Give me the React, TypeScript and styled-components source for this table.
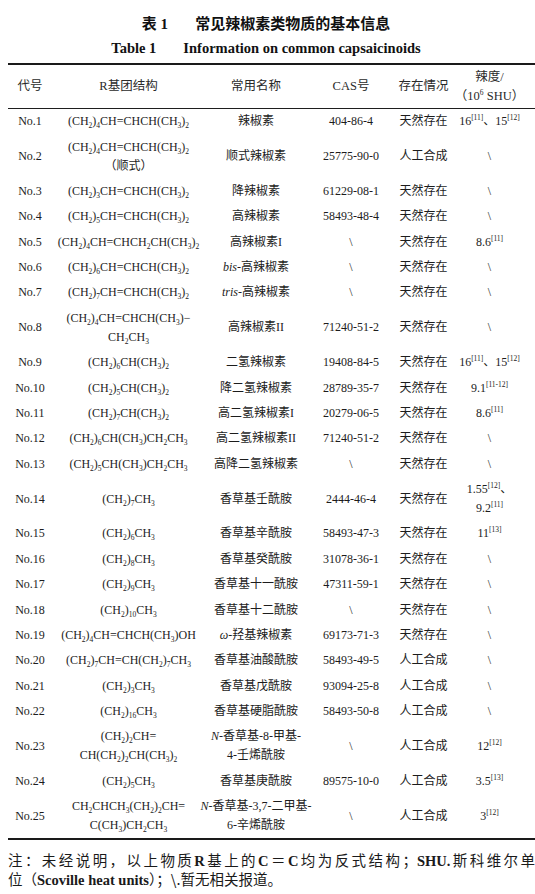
import React from "react";
import styled, { createGlobalStyle } from "styled-components";

const GlobalStyle = createGlobalStyle`
  html, body {
    margin: 0;
    padding: 0;
    background: #ffffff;
    overflow: hidden;
  }
  body {
    font-family: "Liberation Serif", "Noto Sans CJK SC", serif;
    color: #1c1c1c;
  }
`;

const Page = styled.div`
  width: 535px;
  padding: 12px 0 0 8px;
  box-sizing: border-box;
`;

const TitleBlock = styled.div`
  padding-right: 11px;
  margin-bottom: 3px;
`;

const TitleLine = styled.div<{ $latin?: boolean }>`
  display: flex;
  justify-content: center;
  gap: 27px;
  height: 24px;
  line-height: 24px;
  font-weight: 700;
  font-size: ${(p) => (p.$latin ? "14.5px" : "15px")};
  font-family: ${(p) =>
    p.$latin
      ? `"Liberation Serif", serif`
      : `"Liberation Serif", "Noto Sans CJK SC", serif`};
  color: #111;
`;

const Table = styled.div`
  width: 527px;
  border-top: 2.5px solid #1a1a1a;
  border-bottom: 2.5px solid #1a1a1a;
  font-size: 12px;
`;

const Row = styled.div<{ $head?: boolean }>`
  display: grid;
  grid-template-columns: 44px 153px 102px 88px 57px 83px;
  align-items: center;
  border-bottom: ${(p) => (p.$head ? "1.3px solid #1e1e1e" : "none")};
  padding: ${(p) => (p.$head ? "2.5px 0" : "0")};
`;

const Cell = styled.div<{ $last?: boolean }>`
  display: flex;
  flex-direction: column;
  align-items: center;
  justify-content: center;
  text-align: center;
  line-height: 19px;
  padding: 3.2px ${(p) => (p.$last ? "8px" : "0")} 3.2px 0;
  white-space: nowrap;
  color: #1c1c1c;
`;

const HeadCell = styled(Cell)`
  padding-top: 0;
  padding-bottom: 0;
  font-size: 12.5px;
  color: #2a2a2a;
`;

const Sub = styled.sub`
  font-size: 7.5px;
  line-height: 0;
  vertical-align: -2.5px;
`;

const Sup = styled.sup`
  font-size: 7.5px;
  line-height: 0;
  vertical-align: 5px;
`;

const It = styled.i`
  font-style: italic;
`;

const Note = styled.div`
  margin-top: 11px;
  width: 527px;
  font-family: "Noto Sans CJK SC", sans-serif;
  font-size: 14.5px;
  line-height: 17px;
  color: #1a1a1a;
`;

const NoteLine = styled.div<{ $justify?: boolean }>`
  white-space: nowrap;
  text-align: ${(p) => (p.$justify ? "justify" : "left")};
  text-align-last: ${(p) => (p.$justify ? "justify" : "left")};
`;

const Latin = styled.span`
  font-family: "Liberation Serif", serif;
  font-weight: 700;
`;

const Formula = ({ f }: { f: string }) => {
  const parts = f.split(/(_\d+)/);
  return (
    <span>
      {parts.map((p, i) =>
        p.startsWith("_") ? <Sub key={i}>{p.slice(1)}</Sub> : <React.Fragment key={i}>{p}</React.Fragment>
      )}
    </span>
  );
};

type RowData = {
  r: string[];
  name: React.ReactNode[];
  cas: string;
  state: string;
  spice: React.ReactNode[];
};

const none = ["\\"];

const rows: RowData[] = [
  { r: ["(CH_2)_4CH=CHCH(CH_3)_2"], name: ["辣椒素"], cas: "404-86-4", state: "天然存在", spice: [<>16<Sup>[11]</Sup>、15<Sup>[12]</Sup></>] },
  { r: ["(CH_2)_4CH=CHCH(CH_3)_2", "（顺式）"], name: ["顺式辣椒素"], cas: "25775-90-0", state: "人工合成", spice: none },
  { r: ["(CH_2)_3CH=CHCH(CH_3)_2"], name: ["降辣椒素"], cas: "61229-08-1", state: "天然存在", spice: none },
  { r: ["(CH_2)_5CH=CHCH(CH_3)_2"], name: ["高辣椒素"], cas: "58493-48-4", state: "天然存在", spice: none },
  { r: ["(CH_2)_4CH=CHCH_2CH(CH_3)_2"], name: ["高辣椒素I"], cas: "\\", state: "天然存在", spice: [<>8.6<Sup>[11]</Sup></>] },
  { r: ["(CH_2)_6CH=CHCH(CH_3)_2"], name: [<><It>bis</It>-高辣椒素</>], cas: "\\", state: "天然存在", spice: none },
  { r: ["(CH_2)_7CH=CHCH(CH_3)_2"], name: [<><It>tris</It>-高辣椒素</>], cas: "\\", state: "天然存在", spice: none },
  { r: ["(CH_2)_4CH=CHCH(CH_3)−", "CH_2CH_3"], name: ["高辣椒素II"], cas: "71240-51-2", state: "天然存在", spice: none },
  { r: ["(CH_2)_6CH(CH_3)_2"], name: ["二氢辣椒素"], cas: "19408-84-5", state: "天然存在", spice: [<>16<Sup>[11]</Sup>、15<Sup>[12]</Sup></>] },
  { r: ["(CH_2)_5CH(CH_3)_2"], name: ["降二氢辣椒素"], cas: "28789-35-7", state: "天然存在", spice: [<>9.1<Sup>[11-12]</Sup></>] },
  { r: ["(CH_2)_7CH(CH_3)_2"], name: ["高二氢辣椒素I"], cas: "20279-06-5", state: "天然存在", spice: [<>8.6<Sup>[11]</Sup></>] },
  { r: ["(CH_2)_6CH(CH_3)CH_2CH_3"], name: ["高二氢辣椒素II"], cas: "71240-51-2", state: "天然存在", spice: none },
  { r: ["(CH_2)_5CH(CH_3)CH_2CH_3"], name: ["高降二氢辣椒素"], cas: "\\", state: "天然存在", spice: none },
  { r: ["(CH_2)_7CH_3"], name: ["香草基壬酰胺"], cas: "2444-46-4", state: "天然存在", spice: [<>1.55<Sup>[12]</Sup>、</>, <>9.2<Sup>[11]</Sup></>] },
  { r: ["(CH_2)_6CH_3"], name: ["香草基辛酰胺"], cas: "58493-47-3", state: "天然存在", spice: [<>11<Sup>[13]</Sup></>] },
  { r: ["(CH_2)_8CH_3"], name: ["香草基癸酰胺"], cas: "31078-36-1", state: "天然存在", spice: none },
  { r: ["(CH_2)_9CH_3"], name: ["香草基十一酰胺"], cas: "47311-59-1", state: "天然存在", spice: none },
  { r: ["(CH_2)_10CH_3"], name: ["香草基十二酰胺"], cas: "\\", state: "天然存在", spice: none },
  { r: ["(CH_2)_4CH=CHCH(CH_3)OH"], name: [<><It>ω</It>-羟基辣椒素</>], cas: "69173-71-3", state: "天然存在", spice: none },
  { r: ["(CH_2)_7CH=CH(CH_2)_7CH_3"], name: ["香草基油酸酰胺"], cas: "58493-49-5", state: "人工合成", spice: none },
  { r: ["(CH_2)_3CH_3"], name: ["香草基戊酰胺"], cas: "93094-25-8", state: "人工合成", spice: none },
  { r: ["(CH_2)_16CH_3"], name: ["香草基硬脂酰胺"], cas: "58493-50-8", state: "人工合成", spice: none },
  { r: ["(CH_2)_2CH=", "CH(CH_2)_2CH(CH_3)_2"], name: [<><It>N</It>-香草基-8-甲基-</>, "4-壬烯酰胺"], cas: "\\", state: "人工合成", spice: [<>12<Sup>[12]</Sup></>] },
  { r: ["(CH_2)_5CH_3"], name: ["香草基庚酰胺"], cas: "89575-10-0", state: "人工合成", spice: [<>3.5<Sup>[13]</Sup></>] },
  { r: ["CH_2CHCH_3(CH_2)_2CH=", "C(CH_3)CH_2CH_3"], name: [<><It>N</It>-香草基-3,7-二甲基-</>, "6-辛烯酰胺"], cas: "\\", state: "人工合成", spice: [<>3<Sup>[12]</Sup></>] },
];

const Lines = ({ items }: { items: React.ReactNode[] }) => (
  <>
    {items.map((it, i) => (
      <div key={i}>{it}</div>
    ))}
  </>
);

export default function App() {
  return (
    <Page>
      <GlobalStyle />
      <TitleBlock>
        <TitleLine>
          <span>表 1</span>
          <span>常见辣椒素类物质的基本信息</span>
        </TitleLine>
        <TitleLine $latin>
          <span>Table 1</span>
          <span>Information on common capsaicinoids</span>
        </TitleLine>
      </TitleBlock>

      <Table>
        <Row $head>
          <HeadCell>代号</HeadCell>
          <HeadCell>R基团结构</HeadCell>
          <HeadCell>常用名称</HeadCell>
          <HeadCell>CAS号</HeadCell>
          <HeadCell>存在情况</HeadCell>
          <HeadCell $last>
            <div>辣度/</div>
            <div>
              （10<Sup>6</Sup> SHU）
            </div>
          </HeadCell>
        </Row>
        {rows.map((row, i) => (
          <Row key={i}>
            <Cell>No.{i + 1}</Cell>
            <Cell>
              {row.r.map((f, j) => (
                <div key={j}>
                  <Formula f={f} />
                </div>
              ))}
            </Cell>
            <Cell>
              <Lines items={row.name} />
            </Cell>
            <Cell>{row.cas}</Cell>
            <Cell>{row.state}</Cell>
            <Cell $last>
              <Lines items={row.spice} />
            </Cell>
          </Row>
        ))}
      </Table>

      <Note>
        <NoteLine $justify>
          注：未经说明，以上物质<Latin>R</Latin>基上的<Latin>C</Latin>＝<Latin>C</Latin>均为反式结构；<Latin>SHU.</Latin>斯科维尔单
        </NoteLine>
        <NoteLine>
          位（<Latin>Scoville heat units</Latin>）；\.暂无相关报道。
        </NoteLine>
      </Note>
    </Page>
  );
}
